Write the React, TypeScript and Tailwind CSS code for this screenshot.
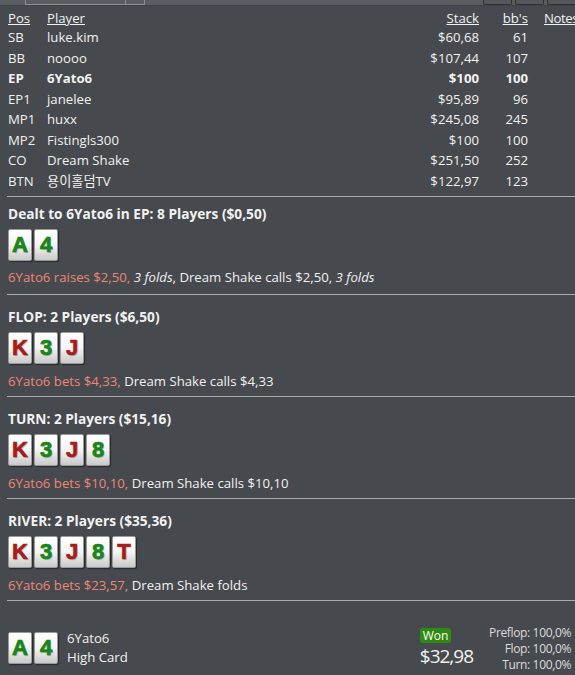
import React from "react";

type Card = { r: string; c: "g" | "r" };

const players = [
  { pos: "SB", name: "luke.kim", stack: "$60,68", bb: "61" },
  { pos: "BB", name: "noooo", stack: "$107,44", bb: "107" },
  { pos: "EP", name: "6Yato6", stack: "$100", bb: "100", hero: true },
  { pos: "EP1", name: "janelee", stack: "$95,89", bb: "96" },
  { pos: "MP1", name: "huxx", stack: "$245,08", bb: "245" },
  { pos: "MP2", name: "Fistingls300", stack: "$100", bb: "100" },
  { pos: "CO", name: "Dream Shake", stack: "$251,50", bb: "252" },
  { pos: "BTN", name: "용이홀덤TV", stack: "$122,97", bb: "123" },
];

const hole: Card[] = [
  { r: "A", c: "g" },
  { r: "4", c: "g" },
];
const board: Card[] = [
  { r: "K", c: "r" },
  { r: "3", c: "g" },
  { r: "J", c: "r" },
  { r: "8", c: "g" },
  { r: "T", c: "r" },
];

function PlayingCard({ card }: { card: Card }) {
  return (
    <div className="w-[24px] h-[32px] rounded-[2px] border border-[#9a9a9a] bg-gradient-to-b from-white via-[#f4f4f4] to-[#c9c9c9] shadow-[1px_1px_1px_rgba(0,0,0,0.45)] flex items-center justify-center">
      <span
        className={
          "font-['Liberation_Sans',Arial,sans-serif] font-bold text-[22px] leading-none [-webkit-text-stroke:0.7px_currentColor] [text-shadow:1px_1px_1px_rgba(0,0,0,0.25)] " +
          (card.c === "g" ? "text-[#17851a]" : "text-[#a81b1b]")
        }
      >
        {card.r}
      </span>
    </div>
  );
}

function Cards({ cards }: { cards: Card[] }) {
  return (
    <div className="flex gap-[2px]">
      {cards.map((c, i) => (
        <PlayingCard key={i} card={c} />
      ))}
    </div>
  );
}

function Street({
  title,
  cards,
  first,
  children,
}: {
  title: string;
  cards: Card[];
  first?: boolean;
  children: React.ReactNode;
}) {
  return (
    <div className={"ml-[7px] border-t border-[#a9abad] pl-px " + (first ? "pt-[7px] pb-[7px]" : "pt-[12px] pb-[5px]")}>
      <div className="font-bold text-[13.7px] h-[20px]">{title}</div>
      <div className="mt-[5px]">
        <Cards cards={cards} />
      </div>
      <div className={"h-[20px] whitespace-nowrap " + (first ? "mt-[6px]" : "mt-[7px]")}>{children}</div>
    </div>
  );
}

export default function App() {
  return (
    <div className="w-[575px] h-[675px] overflow-hidden bg-[#46494d] text-[#f2f2f2] text-[13.2px] leading-[20px] font-['Open_Sans','Noto_Sans',sans-serif]">
      {/* top toolbar, mostly scrolled out */}
      <div className="h-[6px] bg-[#5b5e61] flex items-end pl-[25px] pr-0 border-b border-[#3e4145]">
        <div className="w-[120px] h-[8px] border border-t-0 border-[#8c8f92] flex justify-end">
          <div className="w-[19px] border-l border-[#8c8f92]" />
        </div>
        <div className="flex-1" />
        <div className="flex gap-[3px]">
          <div className="w-[29px] h-[8px] rounded-b-[2px] border border-t-0 border-[#2e3033] bg-[#55585b]" />
          <div className="w-[29px] h-[8px] rounded-b-[2px] border border-t-0 border-[#2e3033] bg-[#55585b]" />
          <div className="w-[28px] h-[8px] rounded-bl-[2px] border border-t-0 border-r-0 border-[#2e3033] bg-[#55585b]" />
        </div>
      </div>

      {/* player table */}
      <div className="pt-[3px] pb-[5px] grid grid-cols-[47px_1fr_80px_49px_47px]">
        <div className="pl-[8px] underline h-[18px] leading-[18px]">Pos</div>
        <div className="underline h-[18px] leading-[18px]">Player</div>
        <div className="text-right underline h-[18px] leading-[18px]">Stack</div>
        <div className="text-right underline h-[18px] leading-[18px]">bb's</div>
        <div className="pl-[16px] underline whitespace-nowrap h-[18px] leading-[18px] tracking-[-0.4px]">Notes</div>
        {players.map((p) => (
          <React.Fragment key={p.pos}>
            <div className={"pl-[8px] h-[20.5px] leading-[20.5px] " + (p.hero ? "font-bold" : "")}>{p.pos}</div>
            <div className={"h-[20.5px] leading-[20.5px] font-['Open_Sans','Noto_Sans','Noto_Sans_CJK_KR',sans-serif] " + (p.hero ? "font-bold" : "")}>
              {p.name}
            </div>
            <div className={"text-right h-[20.5px] leading-[20.5px] " + (p.hero ? "font-bold" : "")}>{p.stack}</div>
            <div className={"text-right h-[20.5px] leading-[20.5px] " + (p.hero ? "font-bold" : "")}>{p.bb}</div>
            <div />
          </React.Fragment>
        ))}
      </div>

      <Street title="Dealt to 6Yato6 in EP: 8 Players ($0,50)" cards={hole} first>
        <span className="text-[#ec8778]">6Yato6 raises $2,50, </span>
        <i>3 folds</i>, Dream Shake calls $2,50, <i>3 folds</i>
      </Street>
      <Street title="FLOP: 2 Players ($6,50)" cards={board.slice(0, 3)}>
        <span className="text-[#ec8778]">6Yato6 bets $4,33, </span>Dream Shake calls $4,33
      </Street>
      <Street title="TURN: 2 Players ($15,16)" cards={board.slice(0, 4)}>
        <span className="text-[#ec8778]">6Yato6 bets $10,10, </span>Dream Shake calls $10,10
      </Street>
      <Street title="RIVER: 2 Players ($35,36)" cards={board}>
        <span className="text-[#ec8778]">6Yato6 bets $23,57, </span>Dream Shake folds
      </Street>

      {/* result */}
      <div className="ml-[7px] border-t border-[#a9abad] pt-[27px] pl-px pr-[4px] flex items-start">
        <div className="mt-[4px]">
          <Cards cards={hole} />
        </div>
        <div className="ml-[9px] mt-[1px] leading-[19px]">
          <div>6Yato6</div>
          <div>High Card</div>
        </div>
        <div className="flex-1" />
        <div className="flex flex-col items-start mr-[16px]">
          <div className="bg-[#2f8a10] rounded-[2px] px-[3px] h-[15px] leading-[15px] text-[12px] text-white">Won</div>
          <div className="text-[19px] leading-[22px] mt-[2px] tracking-[-1px]">$32,98</div>
        </div>
        <div className="text-right text-[12px] leading-[16px] text-[#dcdcdc] whitespace-nowrap -mt-[3px] tracking-[-0.35px]">
          <div>Preflop: 100,0%</div>
          <div>Flop: 100,0%</div>
          <div>Turn: 100,0%</div>
        </div>
      </div>
    </div>
  );
}
